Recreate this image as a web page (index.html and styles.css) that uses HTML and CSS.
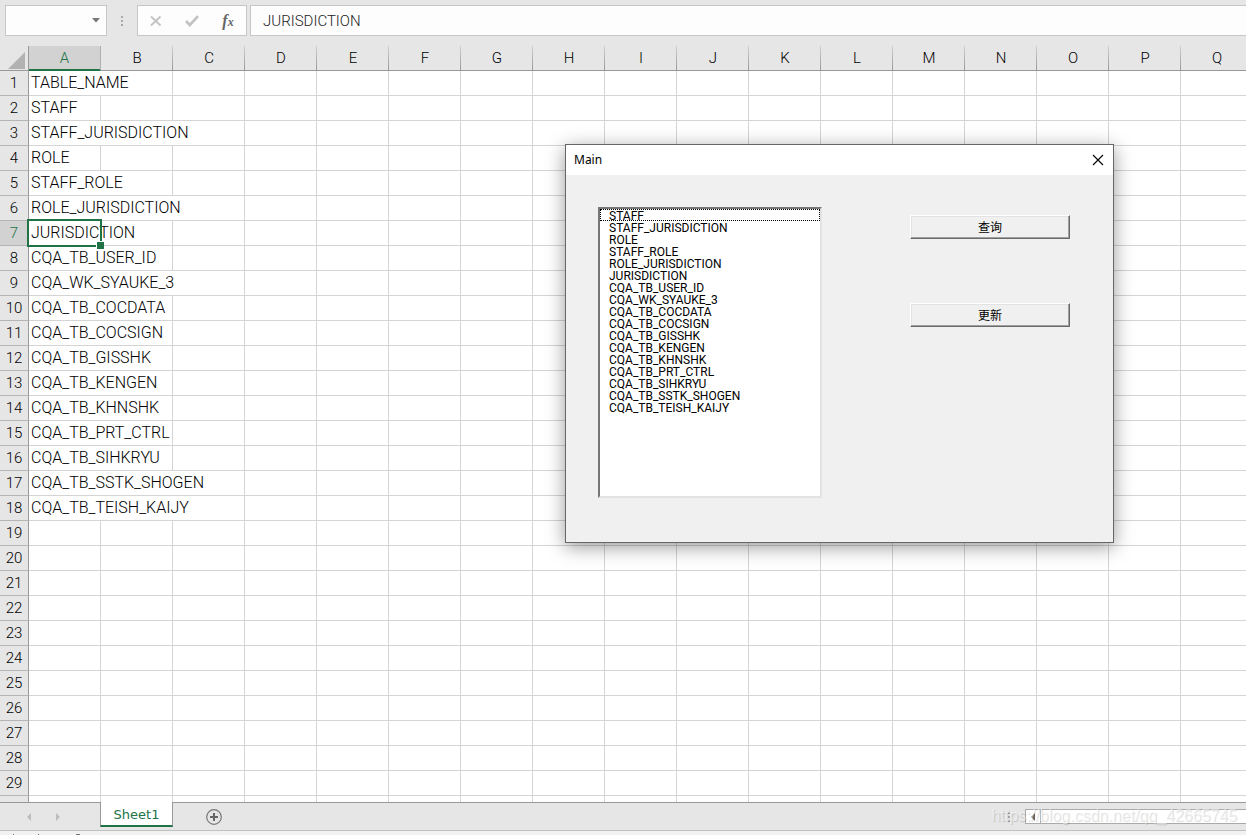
FILE: index.html
```html
<!DOCTYPE html>
<html lang="ja">
<head>
<meta charset="utf-8">
<title>Sheet1</title>
<link rel="stylesheet" href="styles.css">
</head>
<body>
<div class="app">
  <header class="formula-bar">
    <button class="name-box" type="button" aria-label="Name box">
      <svg width="8" height="5" viewBox="0 0 8 5"><path d="M0 0h8L4 4.5z" fill="#777"/></svg>
    </button>
    <span class="grip" aria-hidden="true"><i></i><i></i><i></i></span>
    <div class="formula-tools">
      <button type="button" aria-label="Cancel"><svg width="12" height="12" viewBox="0 0 12 12"><path d="M1 1.5l9.5 9M10.5 1.5L1 10.5" stroke="#c2c2c2" stroke-width="1.8" fill="none"/></svg></button>
      <button type="button" aria-label="Enter"><svg width="14" height="12" viewBox="0 0 14 12"><path d="M1 6l3.8 4L13 1.2" stroke="#c2c2c2" stroke-width="2.6" fill="none"/></svg></button>
      <button type="button" class="fx" aria-label="Insert function">f<sub>x</sub></button>
    </div>
    <input class="formula-input" type="text" aria-label="Formula" value="JURISDICTION">
  </header>

  <main class="sheet-view">
    <table class="grid">
      <thead><tr id="columns"></tr></thead>
      <tbody id="rows"></tbody>
    </table>
  </main>

  <footer class="sheet-bar">
    <div class="sheet-nav">
      <button type="button" aria-label="Previous sheet"><svg width="4" height="8" viewBox="0 0 4 8"><path d="M4 0v8L0 4z" fill="#bdbdbd"/></svg></button>
      <button type="button" aria-label="Next sheet"><svg width="4" height="8" viewBox="0 0 4 8"><path d="M0 0v8l4-4z" fill="#bdbdbd"/></svg></button>
    </div>
    <button type="button" class="tab">Sheet1</button>
    <button type="button" class="add-sheet" aria-label="New sheet"><svg width="16" height="16" viewBox="0 0 16 16" fill="none"><circle cx="8" cy="8" r="7.3" stroke="#777" stroke-width="1.2"/><path d="M8 4v8M4 8h8" stroke="#666" stroke-width="2"/></svg></button>
    <span class="grip small" aria-hidden="true"><i></i><i></i><i></i></span>
    <div class="scrollbar">
      <button type="button" aria-label="Scroll left"><svg width="4" height="8" viewBox="0 0 4 8"><path d="M4 0v8L0 4z" fill="#666"/></svg></button>
    </div>
  </footer>
  <div class="status-bar">
    <svg width="90" height="4" viewBox="0 0 90 4" fill="#777" aria-hidden="true"><path d="M13 3h1v1h-1zM38 3h1v1h-1zM76 3h4v1h-4z"/></svg>
  </div>
</div>

<section class="dialog" role="dialog" aria-labelledby="dialog-title">
  <div class="dialog-title">
    <span id="dialog-title">Main</span>
    <button type="button" aria-label="Close"><svg width="12" height="12" viewBox="0 0 12 12"><path d="M1 1l10 10M11 1L1 11" stroke="#000" stroke-width="1.1" fill="none"/></svg></button>
  </div>
  <div class="dialog-body">
    <select class="table-list" size="20" aria-label="Tables">
      <option class="focused">STAFF</option>
      <option>STAFF_JURISDICTION</option>
      <option>ROLE</option>
      <option>STAFF_ROLE</option>
      <option>ROLE_JURISDICTION</option>
      <option>JURISDICTION</option>
      <option>CQA_TB_USER_ID</option>
      <option>CQA_WK_SYAUKE_3</option>
      <option>CQA_TB_COCDATA</option>
      <option>CQA_TB_COCSIGN</option>
      <option>CQA_TB_GISSHK</option>
      <option>CQA_TB_KENGEN</option>
      <option>CQA_TB_KHNSHK</option>
      <option>CQA_TB_PRT_CTRL</option>
      <option>CQA_TB_SIHKRYU</option>
      <option>CQA_TB_SSTK_SHOGEN</option>
      <option>CQA_TB_TEISH_KAIJY</option>
    </select>
    <div class="actions">
      <button type="button" lang="zh">查询</button>
      <button type="button" lang="zh">更新</button>
    </div>
  </div>
</section>
<div class="watermark">https://blog.csdn.net/qq_42665745</div>
<script src="grid.js"></script>
</body>
</html>
```

FILE: styles.css
```css
* { box-sizing: border-box; }
body {
  margin: 0;
  background: #e6e6e6;
  font-family: Roboto, "Noto Sans CJK JP", sans-serif;
  color: #000;
}
button { font: inherit; color: inherit; background: none; border: 0; padding: 0; }
svg { display: block; }

.app { display: flex; flex-direction: column; height: 100vh; overflow: hidden; }

.formula-bar { display: flex; flex: none; height: 46px; padding: 5px 0 10px 5px; }
.name-box {
  display: flex; align-items: center; justify-content: flex-end;
  width: 102px; padding-right: 6px;
  background: #fdfdfd; border: 1px solid #c6c6c6;
}
.grip { display: flex; flex-direction: column; justify-content: center; align-items: center; gap: 2px; width: 30px; }
.grip i { width: 2px; height: 2px; background: #aaa; }
.formula-tools {
  display: grid; grid-template-columns: repeat(3, 1fr); align-items: center; justify-items: center;
  width: 110px; margin-right: 3px;
  background: #fdfdfd; border: 1px solid #c6c6c6;
}
.fx { font: italic bold 16px/22px "Liberation Serif", serif; color: #666; }
.fx sub { font-size: 12px; line-height: 12px; vertical-align: 0; }
.formula-input {
  flex: 1; min-width: 0; padding: 0 12px;
  font: 300 15px/28px Roboto, sans-serif; color: #222;
  background: #fdfdfd; border: 1px solid #c6c6c6; border-right: 0; border-radius: 0; outline: 0;
}

.sheet-view { flex: 1; min-height: 0; overflow: hidden; background: #fff; }
.grid { table-layout: fixed; width: max-content; border-collapse: separate; border-spacing: 0; font-size: 15px; line-height: 24px; }
.grid th, .grid td { width: 72px; height: 25px; padding: 0; font-weight: 300; }
.grid thead th {
  background: linear-gradient(#d0d0d0, #999) right / 1px 100% no-repeat #e6e6e6;
  border-bottom: 1px solid #999;
}
.grid tr > :first-child {
  width: 29px; background: #e6e6e6;
  border-right: 1px solid #999; border-bottom: 1px solid #b5b5b5;
}
.grid thead tr > :first-child { border-bottom-color: #999; }
.corner svg { margin: 4px 0 0 8px; }
.grid td {
  padding-left: 2px; font-size: 16px; white-space: nowrap;
  border-right: 1px solid #d4d4d4; border-bottom: 1px solid #d4d4d4;
}
.grid thead .active {
  background: #d2d2d2; color: #217346;
  border-right: 1px solid #b0b0b0; box-shadow: inset 0 -1px #217346; border-bottom-color: #217346;
}
.grid tbody .active { background: #d2d2d2; color: #217346; }
.grid .selected { position: relative; }
.selection { position: absolute; left: -2px; top: -2px; width: 75px; height: 28px; border: 2px solid #217346; }
.selection::after { content: ""; position: absolute; right: -4px; bottom: -4px; width: 7px; height: 7px; background: #217346; border: solid #fff; border-width: 1px 0 0 1px; }

.sheet-bar { display: flex; flex: none; height: 29px; background: #e6e6e6; border-top: 1px solid #999; border-bottom: 1px solid #c0c0c0; }
.sheet-nav { display: flex; align-items: center; gap: 25px; width: 100px; padding-left: 27px; }
.tab {
  align-self: flex-start; width: 73px; height: 25px; margin-top: -1px; padding-top: 3px;
  font: 13px/20px "DejaVu Sans", sans-serif; color: #217346;
  background: #fff; border: solid #999; border-width: 0 1px; border-bottom: 2px solid #217346;
}
.add-sheet { margin-left: 33px; }
.grip.small { width: 4px; margin-left: auto; margin-right: 14px; }
.scrollbar { width: 221px; height: 15px; align-self: center; background: #fff; border: 1px solid #aaa; border-right: 0; }
.scrollbar button { display: flex; align-items: center; justify-content: center; width: 15px; height: 13px; border-right: 1px solid #aaa; }
.status-bar { flex: none; height: 4px; background: #f1f1f1; }

.dialog {
  position: absolute; left: 565px; top: 144px; width: 549px;
  background: #f0f0f0; border: 1px solid #666;
  box-shadow: 0 4px 18px rgba(0, 0, 0, .4);
}
.dialog-title {
  display: flex; align-items: center; justify-content: space-between;
  height: 30px; padding: 0 9px 0 8px;
  background: #fff; font: 12px/30px "Noto Sans", sans-serif;
}
.dialog-body { display: flex; justify-content: space-between; padding: 32px 43px 44px 32px; }
.table-list {
  width: 224px; height: 291px; padding: 0; overflow: hidden;
  background: #fff; outline: 0; border-radius: 0;
  border: 2px solid; border-color: #777 #e3e3e3 #e3e3e3 #777;
  font: 12px/12px Roboto, sans-serif; color: #000;
}
.table-list option { min-height: 12px; height: 12px; line-height: 10px; padding: 0 0 0 9px; }
.table-list .focused { outline: 1px dotted #000; outline-offset: -1px; }
.actions { display: flex; flex-direction: column; gap: 64px; padding-top: 8px; }
.actions button {
  width: 160px; height: 24px;
  font: 12px/20px "Noto Sans CJK SC", sans-serif;
  border: 1px solid; border-color: #fff #696969 #696969 #fff;
  box-shadow: inset -1px -1px #a0a0a0, inset 1px 1px #e3e3e3;
}
.watermark {
  position: absolute; right: 9px; bottom: 9px;
  font: 16px/20px "Liberation Sans", sans-serif; color: rgba(255, 255, 255, .5);
  text-shadow: 1px 1px 1px rgba(0, 0, 0, .15); pointer-events: none;
}
```

FILE: grid.js
```js
const names = ["TABLE_NAME", "STAFF", "STAFF_JURISDICTION", "ROLE", "STAFF_ROLE",
  "ROLE_JURISDICTION", "JURISDICTION", "CQA_TB_USER_ID", "CQA_WK_SYAUKE_3",
  "CQA_TB_COCDATA", "CQA_TB_COCSIGN", "CQA_TB_GISSHK", "CQA_TB_KENGEN",
  "CQA_TB_KHNSHK", "CQA_TB_PRT_CTRL", "CQA_TB_SIHKRYU", "CQA_TB_SSTK_SHOGEN",
  "CQA_TB_TEISH_KAIJY"];
// Columns covered by the text of each row that overflows its cell.
const spans = { 1: 2, 3: 3, 5: 2, 6: 3, 7: 2, 8: 2, 9: 3, 10: 2, 11: 2, 12: 2,
  13: 2, 14: 2, 15: 2, 16: 2, 17: 3, 18: 3 };
const selectedRow = 7;
const columnCount = Math.min(26, Math.ceil((window.innerWidth - 29) / 72));
const view = document.querySelector(".sheet-view");
// The last row may be only partly visible; it gets no number then.
const fullRows = Math.floor((view.clientHeight - 25) / 25);

let head = '<th class="corner"><svg width="17" height="17" viewBox="0 0 17 17"><path d="M17 0v17H0z" fill="#b2b2b2"/></svg></th>';
for (let c = 0; c < columnCount; c++) {
  head += `<th scope="col"${c === 0 ? ' class="active"' : ""}>${String.fromCharCode(65 + c)}</th>`;
}
document.getElementById("columns").innerHTML = head;

let body = "";
for (let r = 1; r <= fullRows + 1; r++) {
  const active = r === selectedRow;
  const span = spans[r] || 1;
  body += `<tr><th scope="row"${active ? ' class="active"' : ""}>${r <= fullRows ? r : ""}</th>`;
  body += `<td colspan="${span}"${active ? ' class="selected"' : ""}>${names[r - 1] || ""}${active ? '<span class="selection"></span>' : ""}</td>`;
  body += "<td></td>".repeat(columnCount - span) + "</tr>";
}
document.getElementById("rows").innerHTML = body;
```
